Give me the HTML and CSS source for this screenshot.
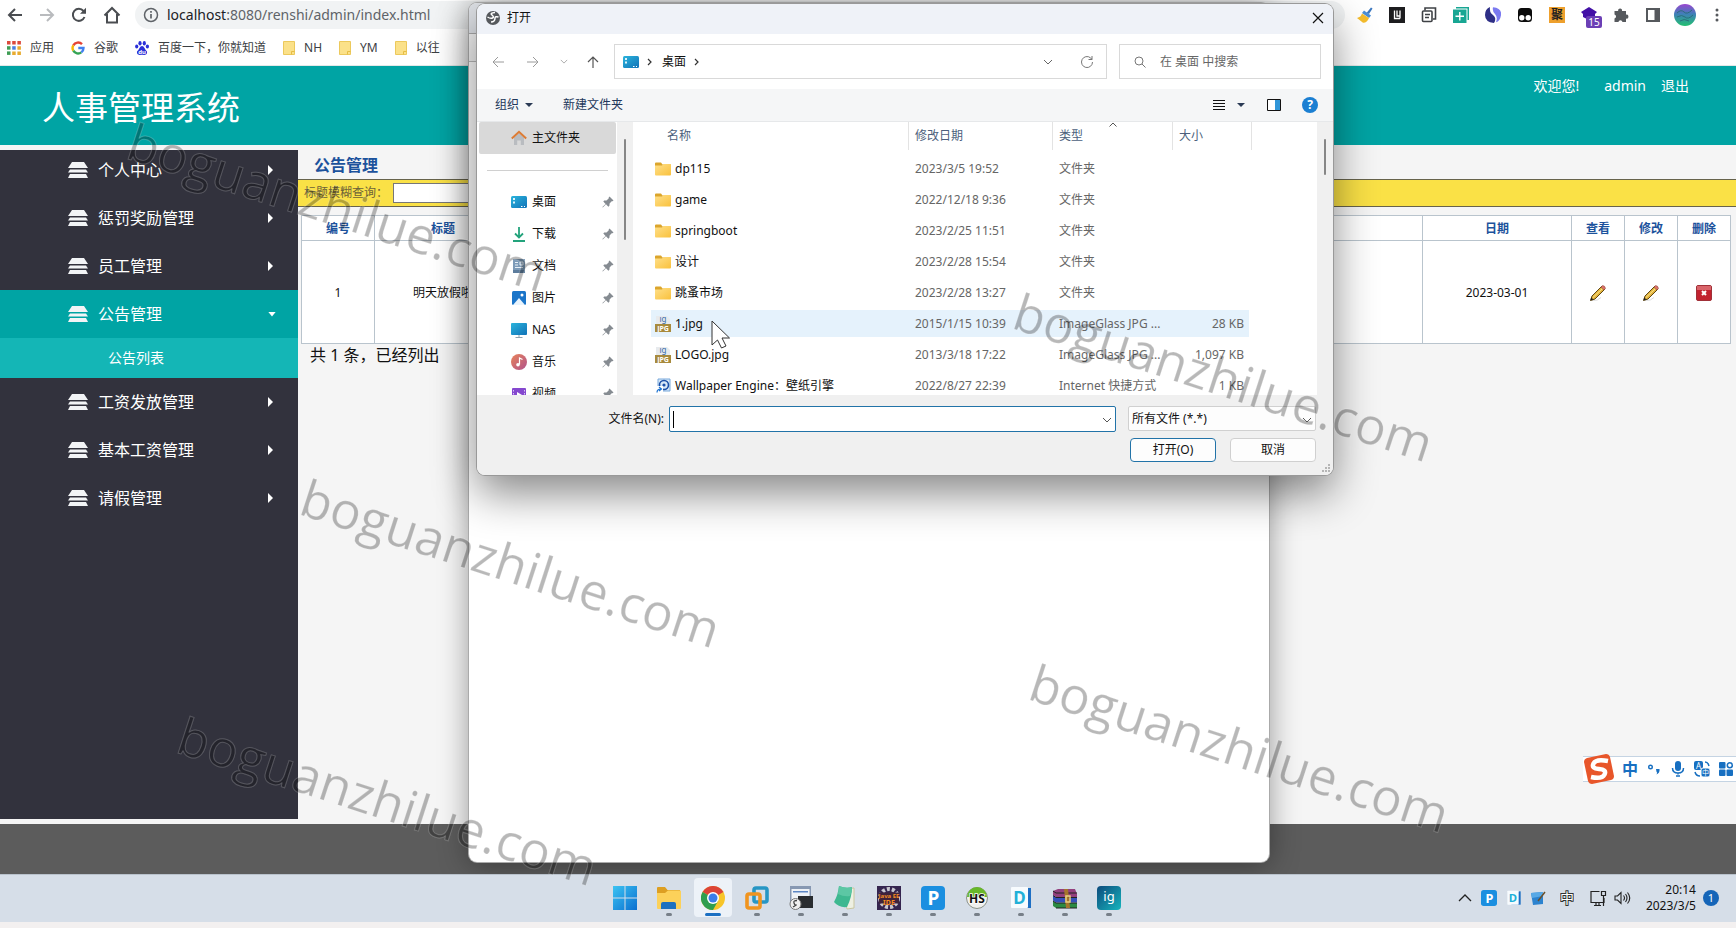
FILE: index.html
```html
<!DOCTYPE html>
<html lang="zh-CN">
<head>
<meta charset="utf-8">
<title>人事管理系统</title>
<link rel="stylesheet" href="styles.css">
</head>
<body>
<svg class="defs" aria-hidden="true">
  <defs>
    <linearGradient id="g-desk" x1="0" y1="0" x2="1" y2="1"><stop offset="0" stop-color="#2bb4dc"/><stop offset="1" stop-color="#1173b8"/></linearGradient>
    <linearGradient id="g-fold" x1="0" y1="0" x2="1" y2="1"><stop offset="0" stop-color="#ffe08a"/><stop offset="1" stop-color="#f9c13d"/></linearGradient>
    <linearGradient id="g-win" x1="0" y1="0" x2="1" y2="1"><stop offset="0" stop-color="#3cc3f2"/><stop offset="1" stop-color="#0a6fd0"/></linearGradient>
    <linearGradient id="g-ig" x1="0" y1="0" x2="1" y2="1"><stop offset="0" stop-color="#0d4a7c"/><stop offset="1" stop-color="#16b5bd"/></linearGradient>
    <linearGradient id="g-av" x1="0" y1="0" x2="0" y2="1"><stop offset="0" stop-color="#9a45d0"/><stop offset=".45" stop-color="#3f7fb8"/><stop offset="1" stop-color="#22c070"/></linearGradient>
    <linearGradient id="g-mus" x1="0" y1="0" x2="1" y2="1"><stop offset="0" stop-color="#e8835a"/><stop offset="1" stop-color="#b0528c"/></linearGradient>
  </defs>
  <symbol id="stack" viewBox="0 0 20 16"><path d="M4 0h12l4 6H0zM2 7.500h16l2 3H0zM2 12h16l2 4H0z"/></symbol>
  <symbol id="folder" viewBox="0 0 16 14"><path d="M0 1.500Q0 .5 1 .5h5l1.500 2H16V5H0z" fill="#dba52c"/><path d="M0 3.500h7L8.500 2H15q1 0 1 1v9.500q0 1-1 1H1q-1 0-1-1z" fill="url(#g-fold)"/></symbol>
  <symbol id="mark" viewBox="0 0 12 14"><path d="M.5.500h11v13H.5z" fill="#fbe189" stroke="#ecc95c"/><path d="M8.500 13.500v-3h3" fill="none" stroke="#e6bd45"/></symbol>
  <symbol id="desk" viewBox="0 0 16 12"><rect width="16" height="12" rx="1.500" fill="url(#g-desk)"/><path d="M2 2h2v2H2zM2 5.500h2v2H2z" fill="#dff4fc"/><path d="M10 10.500h1.500M13 10.500h1" stroke="#fff"/></symbol>
  <symbol id="pin" viewBox="0 0 12 12"><path d="M7.500.500l4 4-1 .8-.8-.1L7.600 7.500l-.2 2.300-1 .9L4 8.300.8 11.500.4 11.100 3.600 7.900 1.300 5.600l.9-1 2.300-.2L6.800 2.300l-.1-.8z" fill="#858b91"/></symbol>
  <symbol id="jpg" viewBox="0 0 16 16"><path d="M1 0h11l3 3v13H1z" fill="#e7eaed"/><text x="8" y="6" class="logo" font-size="8" fill="#356aa8" text-anchor="middle">ig</text><path d="M0 8h16v8H0z" fill="#a88a3d"/><text x="8" y="15" class="logo heavy" font-size="7" fill="#fff" text-anchor="middle">JPG</text></symbol>
  <symbol id="pencil" viewBox="0 0 16 16"><path d="M2 15.500q6 .5 9-3" stroke="#ddd" fill="none"/><path d="M.5 15.500L2 11 12 1l3 3L5 14z" fill="#e3b33c" stroke="#5e4714"/><path d="M3 12.500L13 3" stroke="#fbe78d"/><path d="M11 2l1.500-1.500q2.500 0 3 3L14 5z" fill="#d9706b" stroke="#843" stroke-width=".5"/><path d="M.5 15.500l.8-3 2 2z" fill="#222"/></symbol>
  <symbol id="papp" viewBox="0 0 24 24"><rect width="24" height="24" rx="4" fill="#1b8fe0"/><text x="12.500" y="19" class="logo heavy" font-size="19" fill="#fff" text-anchor="middle">P</text></symbol>
  <symbol id="dapp" viewBox="0 0 24 24"><path d="M8 2h14v20H8z" fill="#1e6fc4"/><rect x="2" y="1" width="17" height="21" rx="1" fill="#f7fbfe"/><text x="10.500" y="17.500" class="logo heavy" font-size="17" fill="#22b0d8" text-anchor="middle">D</text></symbol>
  <symbol id="chev" viewBox="0 0 10 6"><path d="M1 1l4 4 4-4" fill="none" stroke="currentColor"/></symbol>
</svg>

<div class="screen">
  <header class="browser">
    <div class="toolbar">
      <button class="tool" aria-label="后退"><svg width="16" height="16" viewBox="0 0 16 16"><path d="M15 8H2M8 2L2 8l6 6" fill="none" stroke="#4a4d51" stroke-width="2"/></svg></button>
      <button class="tool" aria-label="前进"><svg width="16" height="16" viewBox="0 0 16 16"><path d="M1 8h13M8 2l6 6-6 6" fill="none" stroke="#b9bbbe" stroke-width="2"/></svg></button>
      <button class="tool" aria-label="刷新"><svg width="16" height="16" viewBox="0 0 16 16"><path d="M13.500 10A6 6 0 1 1 12.500 4L14 5.500" fill="none" stroke="#4a4d51" stroke-width="2"/><path d="M15 .8v6H9z" fill="#4a4d51"/></svg></button>
      <button class="tool" aria-label="主页"><svg width="18" height="18" viewBox="0 0 18 18"><path d="M1.500 9.500L9 2l7.500 7.500M4 8v8.500h10V8" fill="none" stroke="#4a4d51" stroke-width="2"/></svg></button>
      <div class="omnibox">
        <svg width="16" height="16" viewBox="0 0 16 16"><circle cx="8" cy="8" r="6.500" fill="none" stroke="#5f6368" stroke-width="1.500"/><path d="M8 7v4.500M8 4v1.700" stroke="#5f6368" stroke-width="1.700"/></svg>
        <span><b>localhost</b>:8080/renshi/admin/index.html</span>
      </div>
      <div class="extensions">
        <button class="ext" aria-label="清理"><svg viewBox="0 0 16 16"><path d="M9.500 6L14 .5l1.500 1L12 7z" fill="#3c78c0"/><path d="M7 3.500l7 5-2 2.500-7-5z" fill="#4a8fd8"/><path d="M5 6.500l7 4.500q-2 5-6 4.700L0 11q4-1 5-4.500z" fill="#f5bd2d"/></svg></button>
        <button class="ext" aria-label="扩展"><svg viewBox="0 0 16 16"><path d="M0 0h16v16H0z" fill="#1d1d1f"/><path d="M5.500 3.500v8h5.500M8 3.500v5.500h3M11 3.500v8" fill="none" stroke="#fff" stroke-width="1.300"/></svg></button>
        <button class="ext" aria-label="复制"><svg viewBox="0 0 16 16"><path d="M4 3.500V1h10.500v11H12" fill="none" stroke="#3e4145" stroke-width="1.600"/><rect x="1.500" y="4" width="9.500" height="10.500" rx="1" fill="#fff" stroke="#3e4145" stroke-width="1.600"/><path d="M4 7.500h5M4 10.500h4" stroke="#3e4145" stroke-width="1.400"/></svg></button>
        <button class="ext" aria-label="翻译"><svg viewBox="0 0 16 16"><path d="M3 0h13v13h-1.500V1.500H3z" fill="#18a693"/><path d="M0 2.500h13.500V16H0z" fill="#18a693"/><path d="M6.800 5v8.500M2.500 9.200h8.500" stroke="#fff" stroke-width="1.400"/></svg></button>
        <button class="ext" aria-label="侧栏"><svg viewBox="0 0 16 16"><path d="M5 0q-1 5 3 8t1 8Q0 15 0 8 0 2 5 0z" fill="#2e2f86"/><path d="M8 .2q9 .8 8 8-1 6-5 7 2-5-1-8.200T8 .200z" fill="#7b7af0"/></svg></button>
        <button class="ext" aria-label="脚本"><svg viewBox="0 0 16 16"><rect x="1" y="1" width="14" height="14" rx="3.500" fill="#0b0b0b"/><circle cx="4.800" cy="10.800" r="2.700" fill="#fff"/><circle cx="11.200" cy="10.800" r="2.700" fill="#fff"/></svg></button>
        <button class="ext ju">聚</button>
        <button class="ext" aria-label="扩展 15"><svg viewBox="0 0 16 16"><path d="M8 0l8 5-2 2v3l-6 3-6-3V7L0 5z" fill="#4311a6"/></svg><span class="count">15</span></button>
        <button class="ext" aria-label="扩展程序"><svg viewBox="0 0 16 16"><path d="M1.500 4h3.700a2 2 0 1 1 3.800 0h4v3.700a2 2 0 1 1 0 3.900V15H9.500a2.100 2.100 0 0 0-4.100 0H1.500V11.500a2 2 0 0 0 0-3.900z" fill="#56595d"/></svg></button>
        <button class="ext" aria-label="侧边栏"><svg viewBox="0 0 16 16"><path d="M2 2h12v12H2z" fill="#fff" stroke="#56595d" stroke-width="2"/><path d="M9.500 2H14v12H9.500z" fill="#56595d"/></svg></button>
        <button class="ext avatar" aria-label="用户"><svg viewBox="0 0 22 22"><circle cx="11" cy="11" r="11" fill="url(#g-av)"/><path d="M3 9q4-4 7-1t8-2M3 13q5-3 8 0t8-2M6 17q4-3 9 0" stroke="#2b6f7c" fill="none"/></svg></button>
        <button class="ext" aria-label="菜单"><svg viewBox="0 0 16 16"><g fill="#56595d"><circle cx="8" cy="3" r="1.500"/><circle cx="8" cy="8" r="1.500"/><circle cx="8" cy="13" r="1.500"/></g></svg></button>
      </div>
    </div>
    <nav class="bookmarks">
      <a href="#"><svg width="14" height="14" viewBox="0 0 14 14"><path d="M0 0h3.500v3.500H0zM5.200 0h3.500v3.500H5.200zM10.400 0h3.500v3.500h-3.500z" fill="#dc4a3d"/><path d="M0 5.200h3.500v3.500H0z" fill="#3f9d55"/><path d="M5.200 5.200h3.500v3.500H5.200z" fill="#4a7fe0"/><path d="M10.400 5.200h3.500v3.500h-3.500zM5.200 10.400h3.500v3.500H5.200zM10.400 10.400h3.500v3.500h-3.500z" fill="#e8ab2f"/><path d="M0 10.400h3.500v3.500H0z" fill="#3f9d55"/></svg>应用</a>
      <a href="#"><svg width="14" height="14" viewBox="0 0 14 14"><g fill="none" stroke-width="2.400"><path d="M2.300 4.300A5.500 5.500 0 0 1 11 3.200" stroke="#e54335"/><path d="M2.300 4.300a5.500 5.500 0 0 0 0 5.400" stroke="#f6b704"/><path d="M2.300 9.700a5.500 5.500 0 0 0 8 1.700" stroke="#34a353"/><path d="M10.300 11.400A5.500 5.500 0 0 0 12.500 7H7.300" stroke="#4280ef"/></g></svg>谷歌</a>
      <a href="#"><svg width="14" height="14" viewBox="0 0 14 14"><g fill="#2a2fd8"><ellipse cx="5" cy="2.200" rx="1.600" ry="2.200"/><ellipse cx="9.300" cy="2.200" rx="1.600" ry="2.200"/><ellipse cx="1.700" cy="5.500" rx="1.600" ry="2"/><ellipse cx="12.400" cy="5.500" rx="1.600" ry="2"/><path d="M7 5q1.500 0 2.500 2t2.500 3.500q.5 3-2.500 3.500-2.500-.5-5 0Q1.500 13.500 2 10.500 3.500 9 4.500 7T7 5z"/></g><text x="7" y="12.500" class="logo heavy" font-size="6" fill="#fff" text-anchor="middle">du</text></svg>百度一下，你就知道</a>
      <a href="#"><svg width="12" height="14"><use href="#mark"/></svg>NH</a>
      <a href="#"><svg width="12" height="14"><use href="#mark"/></svg>YM</a>
      <a href="#"><svg width="12" height="14"><use href="#mark"/></svg>以往</a>
    </nav>
  </header>

  <div class="banner">
    <h1>人事管理系统</h1>
    <div class="welcome"><span>欢迎您!</span><span class="who">admin</span><a href="#">退出</a></div>
  </div>

  <div class="main">
    <nav class="sidebar">
      <ul>
        <li><a href="#"><svg class="stack"><use href="#stack"/></svg><span>个人中心</span><i class="tri"></i></a></li>
        <li><a href="#"><svg class="stack"><use href="#stack"/></svg><span>惩罚奖励管理</span><i class="tri"></i></a></li>
        <li><a href="#"><svg class="stack"><use href="#stack"/></svg><span>员工管理</span><i class="tri"></i></a></li>
        <li class="open"><a href="#"><svg class="stack"><use href="#stack"/></svg><span>公告管理</span><i class="tri"></i></a>
          <a class="sub" href="#">公告列表</a></li>
        <li><a href="#"><svg class="stack"><use href="#stack"/></svg><span>工资发放管理</span><i class="tri"></i></a></li>
        <li><a href="#"><svg class="stack"><use href="#stack"/></svg><span>基本工资管理</span><i class="tri"></i></a></li>
        <li><a href="#"><svg class="stack"><use href="#stack"/></svg><span>请假管理</span><i class="tri"></i></a></li>
      </ul>
    </nav>
    <section class="content">
      <h2>公告管理</h2>
      <div class="query"><label for="q">标题模糊查询：</label><input id="q" type="text"></div>
      <table class="notices">
        <colgroup><col class="c-id"><col class="c-title"><col><col class="c-date"><col class="c-act"><col class="c-act"><col class="c-act"></colgroup>
        <thead><tr><th>编号</th><th>标题</th><th></th><th>日期</th><th>查看</th><th>修改</th><th>删除</th></tr></thead>
        <tbody><tr><td>1</td><td>明天放假啦</td><td></td><td>2023-03-01</td>
          <td><a href="#" aria-label="查看"><svg class="act"><use href="#pencil"/></svg></a></td>
          <td><a href="#" aria-label="修改"><svg class="act"><use href="#pencil"/></svg></a></td>
          <td><a href="#" aria-label="删除"><svg class="act" viewBox="0 0 16 16"><rect x=".5" y=".5" width="15" height="15" rx="1.500" fill="#c2222f" stroke="#a03038"/><path d="M1 1h14v4H1z" fill="#d9646a"/><path d="M6 6l4 4M10 6l-4 4" stroke="#fff" stroke-width="2"/></svg></a></td></tr></tbody>
      </table>
      <p class="total">共 1 条，已经列出</p>
    </section>
  </div>
  <div class="sitefoot"></div>

  <div class="popup">
    <div class="popup-bar"></div><div class="popup-url"></div>
  </div>

  <div class="dialog" role="dialog" aria-label="打开">
    <div class="titlebar">
      <svg width="14" height="14" viewBox="0 0 14 14"><circle cx="7" cy="7" r="7" fill="#56595d"/><path d="M1.500 6q3 2 5 1t-.5-3T9 1.500M12.500 6Q9 5 9 7t-1 3-3 1" fill="none" stroke="#fff" stroke-width="1.500"/></svg>
      <span>打开</span>
      <button aria-label="关闭"><svg width="12" height="12" viewBox="0 0 12 12"><path d="M1 1l10 10M11 1L1 11" stroke="#111" stroke-width="1.200"/></svg></button>
    </div>
    <div class="navrow">
      <button aria-label="后退"><svg width="12" height="12" viewBox="0 0 12 12"><path d="M12 6H1M6 1L1 6l5 5" fill="none" stroke="#9a9a9a"/></svg></button>
      <button aria-label="前进"><svg width="12" height="12" viewBox="0 0 12 12"><path d="M0 6h11M6 1l5 5-5 5" fill="none" stroke="#9a9a9a"/></svg></button>
      <button class="hist" aria-label="最近"><svg width="8" height="5"><use href="#chev"/></svg></button>
      <button aria-label="上移"><svg width="12" height="12" viewBox="0 0 12 12"><path d="M6 12V1M1 6l5-5 5 5" fill="none" stroke="#555" stroke-width="1.200"/></svg></button>
      <div class="address">
        <svg width="16" height="12"><use href="#desk"/></svg>
        <svg class="crumb" width="5" height="8" viewBox="0 0 5 8"><path d="M1 1l3 3-3 3" fill="none" stroke="#333" stroke-width="1.200"/></svg>
        <span>桌面</span>
        <svg class="crumb" width="5" height="8" viewBox="0 0 5 8"><path d="M1 1l3 3-3 3" fill="none" stroke="#333" stroke-width="1.200"/></svg>
        <button class="drop" aria-label="展开"><svg width="10" height="6"><use href="#chev"/></svg></button>
        <button aria-label="刷新"><svg width="14" height="14" viewBox="0 0 14 14"><path d="M12.500 7A5.500 5.500 0 1 1 10.500 2.800L12 4.500M12 1v3.500H8.500" fill="none" stroke="#777"/></svg></button>
      </div>
      <label class="find">
        <svg width="12" height="12" viewBox="0 0 12 12"><circle cx="5" cy="5" r="4" fill="none" stroke="#777"/><path d="M8 8l3.500 3.500" stroke="#777"/></svg>
        <input type="text" placeholder="在 桌面 中搜索" aria-label="搜索">
      </label>
    </div>
    <div class="cmdbar">
      <button class="cmd">组织<i class="caret"></i></button>
      <button class="cmd">新建文件夹</button>
      <span class="push"></span>
      <button class="view" aria-label="视图"><svg width="12" height="10" viewBox="0 0 12 10"><path d="M0 .5h12M0 3.500h12M0 6.500h12M0 9.500h12" stroke="#111"/></svg><i class="caret"></i></button>
      <button aria-label="预览窗格"><svg width="14" height="12" viewBox="0 0 14 12"><path d="M.5.500h13v11H.5z" fill="#fff" stroke="#111"/><path d="M8 1h5v10H8z" fill="#3196d8"/></svg></button>
      <button class="help" aria-label="帮助">?</button>
    </div>
    <div class="panes">
      <div class="places">
        <a class="place home" href="#"><svg viewBox="0 0 16 16"><path d="M3 7.500l5-4.500 5 4.500V15H9.800v-4.500H6.200V15H3z" fill="#b9bcc0"/><path d="M.8 8.500L8 1.800l7.200 6.700" fill="none" stroke="#dd7c35" stroke-width="2"/></svg>主文件夹</a>
        <div class="rule"></div>
        <a class="place" href="#"><svg viewBox="0 -2 16 16"><use href="#desk" width="16" height="12"/></svg>桌面<svg class="pin"><use href="#pin"/></svg></a>
        <a class="place" href="#"><svg viewBox="0 0 16 16"><path d="M8 1v10M4 7.500l4 4 4-4M2 15h12" fill="none" stroke="#23a37c" stroke-width="1.800"/></svg>下载<svg class="pin"><use href="#pin"/></svg></a>
        <a class="place" href="#"><svg viewBox="0 0 16 16"><path d="M2 1h12v14H2z" fill="#7d9bb8"/><path d="M4 4.500h3M4 7h3M4 9.500h8M9 4h3v3H9z" stroke="#e8f0f7" fill="none"/><path d="M2 12h12v3H2z" fill="#5d7d9d"/></svg>文档<svg class="pin"><use href="#pin"/></svg></a>
        <a class="place" href="#"><svg viewBox="0 0 16 16"><rect x="1" y="1" width="14" height="14" rx="1.500" fill="#1b75c9"/><path d="M2 15l6-7 6 7z" fill="#e9f4fd"/><circle cx="11" cy="5" r="1.500" fill="#fff"/></svg>图片<svg class="pin"><use href="#pin"/></svg></a>
        <a class="place" href="#"><svg viewBox="0 0 16 16"><rect y="1" width="16" height="12" rx="1" fill="url(#g-desk)"/><path d="M8 13v2M4.500 15.500h7" stroke="#8aa0ad"/></svg>NAS<svg class="pin"><use href="#pin"/></svg></a>
        <a class="place" href="#"><svg viewBox="0 0 16 16"><circle cx="8" cy="8" r="8" fill="url(#g-mus)"/><path d="M8.500 10.500V4l3 1.500" fill="none" stroke="#fff" stroke-width="1.200"/><circle cx="7" cy="10.800" r="1.800" fill="#fff"/></svg>音乐<svg class="pin"><use href="#pin"/></svg></a>
        <a class="place" href="#"><svg viewBox="0 0 16 16"><rect x="1" y="2" width="14" height="13" rx="1" fill="#8548cf"/><path d="M2.500 4v9M13.500 4v9" stroke="#d9c2f5" stroke-dasharray="1.500 1.500"/><path d="M6 6l5 3-5 3z" fill="#fff"/></svg>视频<svg class="pin"><use href="#pin"/></svg></a>
      </div>
      <div class="bar"><i class="thumb long"></i></div>
      <div class="files">
        <table>
          <colgroup><col class="f-name"><col class="f-date"><col class="f-type"><col class="f-size"></colgroup>
          <thead><tr><th>名称</th><th>修改日期</th><th class="sorted">类型<svg width="8" height="5" viewBox="0 0 8 5"><path d="M.5 4.500L4 1l3.500 3.500" fill="none" stroke="#555"/></svg></th><th>大小</th></tr></thead>
          <tbody>
            <tr><td><svg height="14"><use href="#folder"/></svg>dp115</td><td>2023/3/5 19:52</td><td>文件夹</td><td></td></tr>
            <tr><td><svg height="14"><use href="#folder"/></svg>game</td><td>2022/12/18 9:36</td><td>文件夹</td><td></td></tr>
            <tr><td><svg height="14"><use href="#folder"/></svg>springboot</td><td>2023/2/25 11:51</td><td>文件夹</td><td></td></tr>
            <tr><td><svg height="14"><use href="#folder"/></svg>设计</td><td>2023/2/28 15:54</td><td>文件夹</td><td></td></tr>
            <tr><td><svg height="14"><use href="#folder"/></svg>跳蚤市场</td><td>2023/2/28 13:27</td><td>文件夹</td><td></td></tr>
            <tr class="hover"><td><svg height="16"><use href="#jpg"/></svg>1.jpg</td><td>2015/1/15 10:39</td><td>ImageGlass JPG ...</td><td>28 KB</td></tr>
            <tr><td><svg height="16"><use href="#jpg"/></svg>LOGO.jpg</td><td>2013/3/18 17:22</td><td>ImageGlass JPG ...</td><td>1,097 KB</td></tr>
            <tr><td><svg height="16" viewBox="0 0 16 16"><path d="M3 1h12v12H3z" fill="#d8e8f8" stroke="#79a9dc"/><circle cx="9" cy="7" r="4.500" fill="none" stroke="#1c4fa8" stroke-width="1.600"/><circle cx="9" cy="7" r="1.600" fill="#1c4fa8"/><path d="M0 8h8v8H0z" fill="#fff"/><path d="M2 14.500q0-3.500 4-3.500M4 9l2.500 2L4 13" fill="none" stroke="#1c72d0" stroke-width="1.200"/></svg>Wallpaper Engine：壁纸引擎</td><td>2022/8/27 22:39</td><td>Internet 快捷方式</td><td>1 KB</td></tr>
          </tbody>
        </table>
      </div>
      <div class="bar"><i class="thumb short"></i></div>
    </div>
    <div class="actions">
      <label for="fn">文件名(N):</label>
      <div class="combo"><input id="fn" type="text" value=""><i class="textcaret"></i><svg width="10" height="6"><use href="#chev"/></svg></div>
      <div class="filter"><select aria-label="文件类型"><option>所有文件 (*.*)</option></select><svg width="10" height="6"><use href="#chev"/></svg></div>
      <div class="buttons"><button class="primary">打开(O)</button><button>取消</button></div>
      <svg class="grip" width="9" height="9" viewBox="0 0 9 9"><path d="M6 0h2v2H6zM3 3h2v2H3zM6 3h2v2H6zM0 6h2v2H0zM3 6h2v2H3zM6 6h2v2H6z" fill="#b5b5b5"/></svg>
    </div>
  </div>

  <div class="ime">
    <svg class="sogou" width="32" height="32" viewBox="0 0 32 32"><path d="M4 5Q1 6 1 9L5 28q1 3 4 3l19-4q3-1 3-4L27 4q-1-3-4-3z" fill="#e8562a"/><path d="M25 8Q13 5.500 10.500 10.500t5.500 5.500 5.500 5.500T8 24" fill="none" stroke="#fff" stroke-width="4.500"/></svg>
    <svg width="16" height="16" viewBox="0 0 16 16"><text x="8" y="14" class="logo heavy" font-size="16" fill="#176fc1" text-anchor="middle">中</text></svg>
    <svg width="16" height="16" viewBox="0 0 16 16"><circle cx="4.500" cy="6" r="1.800" fill="none" stroke="#176fc1" stroke-width="1.400"/><path d="M10 8h3.500q.5 4-3 5.500 1.300-2 0-2.800z" fill="#176fc1"/></svg>
    <svg width="16" height="16" viewBox="0 0 16 16"><rect x="5" y="0" width="6" height="10" rx="3" fill="#176fc1"/><path d="M2.500 7q0 5 5.500 5t5.500-5M8 12v1.500M6 15h4" fill="none" stroke="#176fc1" stroke-width="1.500"/></svg>
    <svg width="16" height="16" viewBox="0 0 16 16"><rect x="0" y="0" width="9" height="9" rx="2" fill="#176fc1"/><text x="4.500" y="7.500" class="logo" font-size="8" fill="#fff" text-anchor="middle">A</text><rect x="7" y="7" width="9" height="9" rx="2" fill="#176fc1" stroke="#fff"/><text x="11.500" y="14.300" class="logo" font-size="7" fill="#fff" text-anchor="middle">中</text><path d="M11 1q3 0 4 4M1 11q1 4 5 4" fill="none" stroke="#176fc1" stroke-width="1.500"/></svg>
    <svg width="16" height="16" viewBox="0 0 16 16"><g fill="#176fc1"><rect x="1" y="1" width="6.500" height="6.500" rx="1"/><rect x="1" y="8.500" width="6.500" height="6.500" rx="1"/><rect x="8.500" y="8.500" width="6.500" height="6.500" rx="1"/></g><circle cx="11.800" cy="4.200" r="2.500" fill="none" stroke="#176fc1" stroke-width="1.500"/></svg>
  </div>

  <footer class="taskbar">
    <div class="apps">
      <button aria-label="开始"><svg viewBox="0 0 24 24"><path d="M0 0h11.500v11.500H0zM12.500 0H24v11.500H12.500zM0 12.500h11.500V24H0zM12.500 12.500H24V24H12.500z" fill="url(#g-win)"/></svg></button>
      <button class="run" aria-label="文件资源管理器"><svg viewBox="0 0 24 24"><path d="M0 2q0-1 1-1h7l2.500 3H23v4H0z" fill="#dd9f22"/><path d="M0 7h8l3-2.500h12q1 0 1 1V22q0 1-1 1H1q-1 0-1-1z" fill="#fcd15a"/><path d="M4 23v-5q0-2 2-2h11q2 0 2 2v5z" fill="#1d71c0"/></svg></button>
      <button class="run active" aria-label="Chrome"><svg viewBox="0 0 24 24"><circle cx="12" cy="12" r="12" fill="#f7c52a"/><path d="M12 12L1.600 6a12 12 0 0 1 20.800 0z" fill="#dc4437"/><path d="M12 12L1.600 6A12 12 0 0 0 12 24l5-9z" fill="#2f9e4f"/><circle cx="12" cy="12" r="6" fill="#fff"/><circle cx="12" cy="12" r="4.500" fill="#3b7de8"/></svg></button>
      <button class="run" aria-label="VMware"><svg viewBox="0 0 24 24"><rect x="9" y="2" width="13" height="14" rx="2" fill="none" stroke="#2796c4" stroke-width="3.600"/><rect x="2" y="8" width="13" height="14" rx="2" fill="none" stroke="#f0941f" stroke-width="3.600"/></svg></button>
      <button class="run" aria-label="工具"><svg viewBox="0 0 24 24"><path d="M1 0h21v16H1z" fill="#8798b2"/><path d="M2.500 3h18v11h-18z" fill="#eef2f7"/><path d="M4 5h15v1.500H4z" fill="#5c86c4"/><path d="M9 10h15v12H9z" fill="#292c30"/><circle cx="6.500" cy="18" r="5.500" fill="#f0f0f0" stroke="#777"/><path d="M8 14.500q-4 0-3 2.500t2 2-3 2" fill="none" stroke="#444" stroke-width="1.300"/></svg></button>
      <button class="run" aria-label="记事本"><svg viewBox="0 0 24 24"><path d="M9 3l12-1v20l-7 1z" fill="#eef0e2" stroke="#cac6a0"/><path d="M6 0q7 3 13 1 0 10-5 20-8 1-13-5Q5 9 6 0z" fill="#3eb890"/><path d="M6 0q7 3 13 1 0 5-2 9-6 1-12-2z" fill="#5cc7a4"/></svg></button>
      <button class="run" aria-label="Java EE IDE"><svg viewBox="0 0 24 24"><path d="M0 0h24v24H0z" fill="#35254f"/><circle cx="12" cy="12" r="9" fill="none" stroke="#c8c6cf" stroke-width="4" stroke-dasharray="3 2"/><path d="M2 6.500h20v11H2z" fill="#40223a"/><g class="logo heavy" fill="#f58b24" text-anchor="middle"><text x="12" y="12" font-size="6">Java EE</text><text x="12" y="18.500" font-size="7">IDE</text></g></svg></button>
      <button class="run" aria-label="P"><svg><use href="#papp"/></svg></button>
      <button class="run" aria-label="HS"><svg viewBox="0 0 24 24"><circle cx="12" cy="12" r="10.500" fill="#f0f0ee" stroke="#8b9288"/><path d="M2 11a10 10 0 0 1 20 0z" fill="#68b829"/><text x="12" y="16.500" class="logo heavy" font-size="12" fill="#111" stroke="#fff" stroke-width="1.500" paint-order="stroke" text-anchor="middle">HS</text></svg></button>
      <button class="run" aria-label="D"><svg><use href="#dapp"/></svg></button>
      <button class="run" aria-label="WinRAR"><svg viewBox="0 0 24 24"><path d="M0 5l5-2h17l2 5v3H3L0 9z" fill="#93407d"/><path d="M0 9.500l3 2h21v5H3l-3-2z" fill="#3450b8"/><path d="M0 15l3 2h21v5H3l-3-2z" fill="#2b8a42"/><path d="M0 5l3 2h21M0 9.500l3 2h21M0 15l3 2h21M3 22h21" fill="none" stroke="#222"/><path d="M11 3h4l2 19h-4z" fill="#a5752c"/><path d="M13 10h4v6h-4z" fill="none" stroke="#ead282" stroke-width="1.500"/></svg></button>
      <button class="run" aria-label="ImageGlass"><svg viewBox="0 0 24 24"><rect width="24" height="24" rx="4" fill="url(#g-ig)"/><text x="12" y="15" class="logo" font-size="13" fill="#fff" text-anchor="middle">ig</text></svg></button>
    </div>
    <div class="tray">
      <svg width="14" height="8" viewBox="0 0 14 8"><path d="M1 7l6-6 6 6" fill="none" stroke="#222" stroke-width="1.300"/></svg>
      <svg class="t-p" width="16" height="16"><use href="#papp"/></svg>
      <svg class="t-d" width="16" height="16"><use href="#dapp"/></svg>
      <svg class="t-b" width="16" height="16" viewBox="0 0 16 16"><path d="M1 3l12-1v12L3 15z" fill="#2c83cf"/><path d="M1 3l12-1v4L2 8z" fill="#58a9e6"/><path d="M15 2L8 11" stroke="#6b4f2a" stroke-width="1.500"/></svg>
      <svg class="t-z" width="14" height="16" viewBox="0 0 14 16"><text x="7" y="13" class="logo" font-size="14" fill="#fff" stroke="#333" stroke-width="2" paint-order="stroke" text-anchor="middle">中</text></svg>
      <svg class="t-m" width="17" height="17" viewBox="0 0 17 17"><path d="M9.500 1.500H1v11h13V8M4 15.500h7M6 13v2M9 13v2M11.500 1.500h4v4h-4zM13.500 5.500V16" fill="none" stroke="#222" stroke-width="1.200"/></svg>
      <svg class="t-s" width="17" height="14" viewBox="0 0 17 14"><path d="M1 5h2.500L7 1.500v11L3.500 9H1zM9.500 4.500q2 2.500 0 5M11.500 3q3 4 0 8M13.500 1.500q4.500 5.500 0 11" fill="none" stroke="#222" stroke-width="1.100"/></svg>
      <div class="clock"><time>20:14</time><time>2023/3/5</time></div>
      <span class="badge">1</span>
    </div>
  </footer>

  <svg class="cursor" width="20" height="30" viewBox="0 0 20 30"><path d="M1 1v24l5.500-5 4 8 4.500-2-4-8h7.500z" fill="#fff" stroke="#333"/></svg>

  <div class="wm w1">boguanzhilue.com</div>
  <div class="wm w2">boguanzhilue.com</div>
  <div class="wm w3">boguanzhilue.com</div>
  <div class="wm w4">boguanzhilue.com</div>
  <div class="wm w5">boguanzhilue.com</div>
</div>
</body>
</html>
```
FILE: styles.css
```css
*{box-sizing:border-box}
body{margin:0;font:12px/16px "Noto Sans","Noto Sans CJK SC",sans-serif;color:#111}
button{border:0;background:none;padding:0;margin:0;font:inherit;color:inherit;display:flex;align-items:center;justify-content:center}
input,select{font:inherit;color:inherit}
a{color:inherit;text-decoration:none}
svg{display:block;flex:none}
h1,h2,p,ul{margin:0;padding:0;list-style:none}
.defs{position:absolute;width:0;height:0}
.logo{font-family:"Noto Sans","Noto Sans CJK SC",sans-serif}
.heavy{font-weight:700}
.screen{position:relative;min-height:100vh;display:flex;flex-direction:column;overflow:hidden;background:#f5f5f5}

/* browser chrome */
.browser{height:66px;background:#fff;border-bottom:1px solid #e4e8e8}
.toolbar{display:flex;align-items:center;height:30px;padding:0 7px}
.tool{width:32px;justify-content:flex-start}
.omnibox{flex:1;display:flex;align-items:center;gap:8px;height:28px;border-radius:14px;background:#f1f3f4;padding-left:8px;margin-right:8px;font-size:14px;color:#5f6368;white-space:nowrap}
.omnibox b{font-weight:400;color:#202124}
.extensions{display:flex;gap:8px}
.ext{position:relative;width:24px;height:24px}
.ext svg{width:16px;height:16px}
.avatar svg{width:22px;height:22px}
.ju{background:#eea02d content-box;padding:4px;font-weight:700;color:#222}
.count{position:absolute;left:9px;top:13px;width:16px;height:12px;border-radius:2px;background:#6b3fb5;color:#fff;font-size:10px;line-height:12px;text-align:center}
.bookmarks{display:flex;align-items:center;gap:17px;height:35px;padding-left:7px;color:#3c4043}
.bookmarks a{display:flex;align-items:center;gap:9px;white-space:nowrap}

/* application header */
.banner{display:flex;justify-content:space-between;height:79px;padding:0 47px 0 42px;background:#00a4a4;color:#fff}
.banner h1{font-size:33px;font-weight:400;line-height:84px}
.welcome{display:flex;font-size:14px;line-height:40px}
.who{margin:0 15px 0 25px}

.main{flex:1;display:grid;grid-template-columns:298px 1fr;padding:5px 0}
.sidebar{background:#32323d;color:#fff;font-size:16px;overflow:hidden}
.sidebar ul{margin-top:-4px}
.sidebar a{display:flex;align-items:center;height:48px;padding:0 22px 0 68px}
.sidebar span{flex:1;margin-left:10px}
.stack{width:20px;height:16px;fill:#f2f4f6}
.tri{width:8px;height:10px;background:#fff;clip-path:polygon(0 0,5px 50%,0 100%)}
.open{background:#00a4a4}
.open .tri{width:8px;height:5px;clip-path:polygon(0 0,100% 0,50% 100%)}
.sidebar .sub{height:40px;padding-left:108px;background:#14b6b6;font-size:14px}

.content{min-width:0}
.content h2{height:29px;padding-left:16px;font-size:16px;line-height:30px;font-weight:600;color:#1c529c}
.query{display:flex;align-items:center;height:28px;padding-left:6px;border:1px solid #67634b;border-width:1px 0;background:#fae146;color:#6c6238}
.query input{width:150px;height:20px;margin-left:5px;border:1px solid #777;background:#fff}
.notices{width:calc(100% - 8px);margin:8px 5px 0 3px;table-layout:fixed;border-collapse:collapse;background:#fff;text-align:center}
.notices th,.notices td{border:1px solid #b9c4cd;padding:1px 0 0}
.notices th{height:25px;font-weight:600;color:#1c529c}
.notices td{height:103px}
.c-id{width:73px}.c-title{width:137px}.c-date{width:149px}.c-act{width:53px}
.act{width:16px;height:16px;margin:0 auto}
.total{padding-left:12px;font-size:16px;line-height:23px}
.sitefoot{height:50px;background:#5c5c5c}

/* windows floating over the page */
.popup{position:absolute;left:469px;top:3px;width:800px;height:859px;border-radius:8px;background:#fff;box-shadow:0 0 0 1px #aaa,0 2px 30px rgba(0,0,0,.4);overflow:hidden}
.popup-bar{height:31px;background:#dee1e6;border-bottom:1px solid #aaa}
.popup-url{height:28px;background:#f5f5f5;border-bottom:1px solid #bbb}
.dialog{position:absolute;left:477px;top:4px;width:856px;border-radius:8px;background:#fff;box-shadow:0 0 0 1px #999,0 18px 44px rgba(0,0,0,.48);overflow:hidden}
.titlebar{display:flex;align-items:center;gap:7px;height:30px;padding:0 8px 2px 9px;background:#eff2f8}
.titlebar button{width:14px;height:14px;margin-left:auto}
.navrow{display:flex;align-items:center;height:55px;padding:0 12px 0 9px}
.navrow>button{width:24px;height:24px;margin-right:11px}
.navrow .hist{width:16px;margin-right:9px;color:#999}
.navrow>button:nth-of-type(4){margin-right:9px}
.address{display:flex;align-items:center;flex:1;height:35px;padding:0 12px 0 8px;border:1px solid #d9d9d9}
.address .crumb{margin:0 10px 0 8px}
.address .drop{margin:0 27px 0 auto;color:#666}
.find{display:flex;align-items:center;gap:14px;width:202px;height:35px;margin-left:12px;padding-left:14px;border:1px solid #d9d9d9}
.find input{width:150px;border:0;padding:0;outline:0;background:none}
.find input::placeholder{color:#666;opacity:1}
.cmdbar{display:flex;align-items:center;height:33px;padding:0 15px 0 18px;background:#f5f6f7;border-bottom:1px solid #e6e8ea}
.cmd{gap:6px;margin-right:30px;color:#22375a}
.caret{width:8px;height:4px;background:#2b3a55;clip-path:polygon(0 0,100% 0,50% 100%)}
.push{flex:1}
.view{gap:12px;margin-right:22px}
.help{width:16px;height:16px;margin-left:21px;border-radius:8px;background:#1b7fd2;color:#fff;font-weight:700}
.panes{display:flex;height:273px;overflow:hidden}
.places{width:140px;overflow:hidden}
.place{display:flex;align-items:center;gap:5px;height:32px;padding:0 3px 0 34px}
.place svg{width:16px;height:16px}
.place .pin{width:12px;height:12px;margin-left:auto}
.home{margin:0 1px 0 2px;padding-left:32px;background:#d9d9d9;border-radius:2px}
.rule{height:32px;margin:0 9px 0 10px;background:linear-gradient(#d0d0d0,#d0d0d0) 0 16px/100% 1px no-repeat}
.bar{width:16px;background:#f0f0f0;padding:17px 0 0 7px}
.thumb{display:block;width:2px;background:#868686;border-radius:1px}
.long{height:101px}.short{height:36px}
.files{flex:1;padding-left:18px}
.files table{width:601px;table-layout:fixed;border-collapse:separate;border-spacing:0}
.f-name{width:258px}.f-date{width:144px}.f-type{width:120px}.f-size{width:79px}
.files th{position:relative;height:28px;padding:0 6px;border-right:1px solid #e3e3e3;text-align:left;font-weight:400;color:#4c5f7c}
.files th:first-child{padding-left:16px}
.files tbody::before{content:"";display:block;height:3px}
.sorted svg{position:absolute;left:56px;top:0}
.files td{height:31px;padding:0 6px;color:#666;white-space:nowrap;border:solid #fff;border-width:2px 0}
.files td:first-child{display:flex;align-items:center;gap:4px;padding:0 4px;color:#111}
.files td svg{width:16px}
.files td:last-child{text-align:right;padding-right:5px;border-right-width:3px}
.files .hover td{background:#e5f2fc}
.actions{position:relative;display:grid;grid-template-columns:192px 447px 200px;height:80px;padding-top:11px;background:#f0f0f0;align-content:start}
.actions label{padding-right:5px;line-height:26px;text-align:right}
.combo,.filter{position:relative;height:26px}
.combo input{width:100%;height:26px;padding:0 24px 0 4px;border:1px solid #2273a8;border-radius:2px;background:#fff;outline:0}
.textcaret{position:absolute;left:4px;top:5px;width:1px;height:17px;background:#000}
.combo svg,.filter svg{position:absolute;right:4px;top:11px;color:#555}
.filter{margin-left:12px}
.filter select{width:100%;height:25px;padding:0 3px;border:1px solid #d0d0d0;border-radius:2px;background:#fdfdfd;appearance:none}
.buttons{grid-column:1/-1;display:flex;justify-content:flex-end;gap:14px;margin-top:6px}
.buttons button{width:86px;height:24px;border:1px solid #d0d0d0;border-radius:4px;background:#fdfdfd}
.buttons .primary{border-color:#2273a8}
.grip{position:absolute;right:2px;bottom:2px}

.ime{position:absolute;right:0;bottom:146px;display:flex;align-items:center;gap:8px;height:26px;padding-right:2px;background:#fff;border:1px solid #c5d4e3;border-width:1px 0}
.sogou{margin-right:-1px}

/* task bar */
.taskbar{position:relative;display:flex;justify-content:center;height:54px;background:#d6dee8;border-top:1px solid #b9c2cc;border-bottom:6px solid #f3f0f0}
.apps{display:flex;gap:6px;margin:3px 3px 0 0}
.apps button{position:relative;width:38px;height:39px;border-radius:4px}
.apps svg{width:24px;height:24px}
.run::after{content:"";position:absolute;left:16px;bottom:1px;width:6px;height:3px;border-radius:2px;background:#777f88}
.apps .active{background:#edf2f8}
.active::after{left:11px;width:16px;background:#1b6fc2}
.tray{position:absolute;right:17px;top:0;height:46px;display:flex;align-items:center}
.t-p{margin-left:9px}.t-d{margin-left:9px}.t-b{margin-left:8px}.t-z{margin-left:14px}.t-m{margin-left:16px}.t-s{margin-left:7px}
.clock{display:flex;flex-direction:column;width:65px;text-align:right}
.badge{width:16px;height:16px;margin-left:7px;border-radius:8px;background:#1565b8;color:#fff;font-size:11px;text-align:center}

.cursor{position:absolute;left:711px;top:320px}
.wm{position:absolute;font:51px/50px "Open Sans",sans-serif;white-space:nowrap;color:rgba(0,0,0,.28);-webkit-text-stroke:1px rgba(255,255,255,.2);transform-origin:4px 44px;transform:rotate(18deg);pointer-events:none}
.w1{left:124px;top:114px}
.w2{left:297px;top:470px}
.w3{left:174px;top:708px}
.w4{left:1010px;top:284px}
.w5{left:1026px;top:655px}
```
